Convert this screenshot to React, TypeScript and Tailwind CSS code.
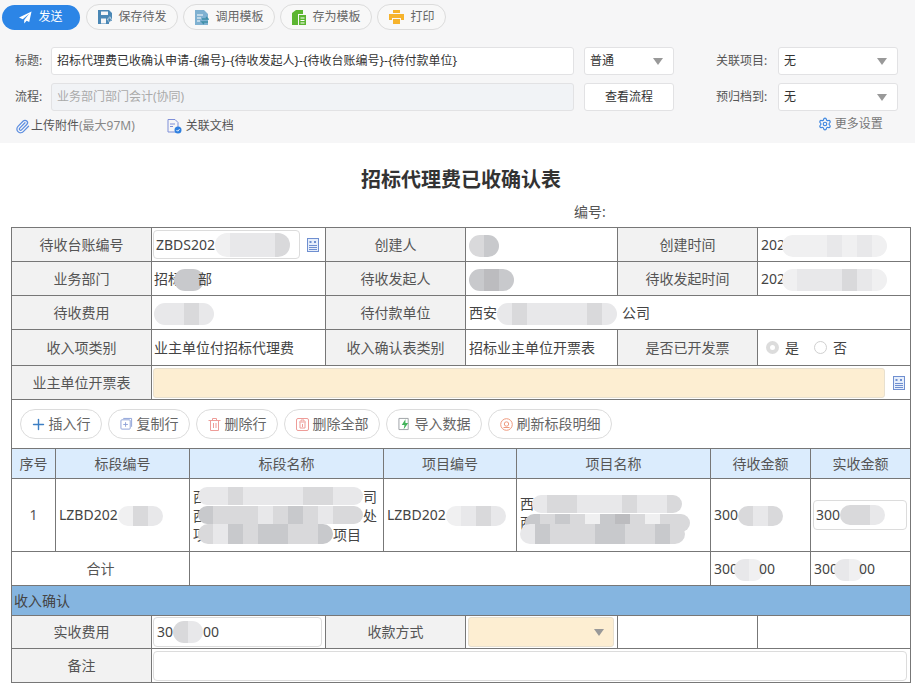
import type { ReactNode } from 'react';
import { Paperclip, Plus, Settings } from 'lucide-react';

const L = '#d9d9db';
const M = '#c8c9cc';
const S = '#e8e8ea';
const W = '#f0f0f1';

function Blur({ cells, h = 'h-5', className = '' }: { cells: string[]; h?: string; className?: string }) {
  return (
    <span className={`inline-flex align-middle -my-2 overflow-hidden rounded-full shrink-0 ${h} ${className}`}>
      {cells.map((c, i) => (
        <span key={i} className="w-[15px] h-full" style={{ backgroundColor: c }} />
      ))}
    </span>
  );
}

function SendIcon() {
  return (
    <svg width="13" height="13" viewBox="0 0 14 14" fill="#fff">
      <path d="M13.5.5 0 7l4 1.8L11 3 5.6 9.6V13.5l2.6-2.9 2.8 1.3z" />
    </svg>
  );
}

function SaveIcon() {
  return (
    <svg width="14" height="14" viewBox="0 0 14 14">
      <path d="M0 0h11l3 3v8h-3v3H0z" fill="#4a87b5" />
      <path d="M3 1.5h7v3.5H3zM3 8.5h5v5H3z" fill="#f6f6f7" />
      <path d="M9 9h2V7h1.5v2H14l-2.3 3.5z" fill="#4a87b5" stroke="#f6f6f7" strokeWidth=".5" />
    </svg>
  );
}

function TemplateIcon() {
  return (
    <svg width="14" height="15" viewBox="0 0 14 15">
      <path d="M0 0h9l4 4v11H0z" fill="#7fb1d1" />
      <path d="M2 5h6M2 8h4M2 11h3" stroke="#fff" strokeWidth="1.2" />
      <path d="M7 9h6l-2-2M13 12H7l2 2" stroke="#3f8fa8" strokeWidth="1.3" fill="none" />
    </svg>
  );
}

function SaveTemplateIcon() {
  return (
    <svg width="14" height="15" viewBox="0 0 14 15">
      <path d="M0 3 4 0h7v4H6v11H0z" fill="#5cb531" />
      <path d="M7 5h7v10H7z" fill="#5cb531" />
      <path d="M8.5 8h4M8.5 10.5h4M8.5 13h4" stroke="#fff" strokeWidth="1.2" />
    </svg>
  );
}

function PrintIcon() {
  return (
    <svg width="15" height="14" viewBox="0 0 15 14" fill="#f6b32c">
      <path d="M4 0h7v3H4zM0 4h15v6h-3V8H3v2H0zM4 9h7v5H4z" />
    </svg>
  );
}

function CopyIcon() {
  return (
    <svg width="13" height="14" viewBox="0 0 14 15" fill="none" stroke="#8a9fd6">
      <path d="M3.5 1.5h9v9" />
      <rect x="1" y="3" width="10" height="10" rx="1" />
      <path d="M6 5.5v5M3.5 8h5" />
    </svg>
  );
}

function TrashIcon() {
  return (
    <svg width="13" height="13" viewBox="0 0 12 13" fill="none" stroke="#ee9c98">
      <path d="M0 2.5h12M4 2V.5h4V2M2 3v9.500h8V3M5 5v5M7.500 5v5" />
    </svg>
  );
}

function TrashAllIcon() {
  return (
    <svg width="13" height="14" viewBox="0 0 13 14" fill="none" stroke="#ee9c98">
      <rect x=".5" y="1.500" width="12" height="12" rx="1.500" />
      <path d="M3 5h7M5 4.500V3h3v1.500M4 5.500v5.500h5V5.500M6.500 7v3" />
    </svg>
  );
}

function ImportIcon() {
  return (
    <svg width="13" height="14" viewBox="0 0 14 14">
      <path d="M1 1h10v12H1z" fill="none" stroke="#9a9fa3" />
      <path d="M8 2 4 8h3l-1 5 5-7H8z" fill="#43b35b" />
    </svg>
  );
}

function RefreshIcon() {
  return (
    <svg width="13" height="13" viewBox="0 0 13 13" fill="none" stroke="#ef9a7e">
      <circle cx="6.500" cy="6.500" r="5.800" />
      <circle cx="6.500" cy="6" r="2.200" />
      <path d="M3.500 9.500h6" />
    </svg>
  );
}

function LinkDocIcon() {
  return (
    <svg width="15" height="15" viewBox="0 0 15 15">
      <path d="M1 .5h7l3 3V13H1z" fill="#f6f6f7" stroke="#7f8fd8" />
      <path d="M3 5h5M3 7.500h3" stroke="#7f8fd8" />
      <circle cx="11" cy="11" r="3.500" fill="#2f80e0" />
      <path d="m9.500 11 1.200 1.200 1.800-2" stroke="#fff" fill="none" />
    </svg>
  );
}

function FormIcon() {
  return (
    <svg width="12" height="14" viewBox="0 0 12 14" className="shrink-0">
      <rect x=".5" y=".5" width="11" height="13" fill="#e6eefb" stroke="#6f8fd0" />
      <path d="M2.500 3h2v2h-2zM7 3h2v2H7z" fill="#6f8fd0" />
      <path d="M2 7.500h8M2 9.500h8M2 11.500h8" stroke="#6f8fd0" />
    </svg>
  );
}

function Caret() {
  return <span className="w-0 h-0 border-x-[5.5px] border-t-[7px] border-x-transparent border-t-[#999]" />;
}

function ToolButton({ icon, children }: { icon: ReactNode; children: ReactNode }) {
  return (
    <div className="flex items-center h-[26px] px-[10.5px] gap-[7px] rounded-full border border-[#dcdcdc] bg-[#f8f8f8] text-xs text-[#666]">
      {icon}
      <span>{children}</span>
    </div>
  );
}

function DetailButton({ icon, children }: { icon: ReactNode; children: ReactNode }) {
  return (
    <div className="flex items-center h-[30px] px-[10.5px] gap-1 rounded-full border border-[#dcdcdc] bg-white text-sm text-[#666]">
      {icon}
      <span>{children}</span>
    </div>
  );
}

function Select({ value, width }: { value: string; width: string }) {
  return (
    <div className={`flex items-center justify-between h-7 pl-[5px] pr-[10px] bg-white border border-[#e2e2e4] rounded-[3px] text-xs text-[#333] ${width}`}>
      <span>{value}</span>
      <Caret />
    </div>
  );
}

function Th({ children, colSpan }: { children?: ReactNode; colSpan?: number }) {
  return (
    <td colSpan={colSpan} className="border border-[#777] bg-[#f2f2f2] text-center text-[#555] p-0">
      {children}
    </td>
  );
}

function Td({ children, colSpan, className = '' }: { children?: ReactNode; colSpan?: number; className?: string }) {
  return (
    <td colSpan={colSpan} className={`border border-[#777] px-[3px] py-0 text-[#444] whitespace-nowrap overflow-hidden ${className}`}>
      {children}
    </td>
  );
}

function HeadCell({ children }: { children: ReactNode }) {
  return <td className="border border-[#777] bg-[#dbecfd] text-center text-[#555] p-0">{children}</td>;
}

export default function App() {
  return (
    <div className="w-[915px] h-[688px] overflow-hidden bg-white text-sm font-['Noto_Sans','Noto_Sans_CJK_SC',sans-serif]">
      <div className="h-[143px] bg-[#f6f6f7]">
        <div className="flex items-center gap-[5px] pt-1 pl-[2px]">
          <div className="flex items-center justify-center gap-[6px] w-[78px] h-[25px] rounded-full bg-[#2c85e6] text-xs text-white mr-[1px]">
            <SendIcon />
            <span>发送</span>
          </div>
          <ToolButton icon={<SaveIcon />}>保存待发</ToolButton>
          <ToolButton icon={<TemplateIcon />}>调用模板</ToolButton>
          <ToolButton icon={<SaveTemplateIcon />}>存为模板</ToolButton>
          <ToolButton icon={<PrintIcon />}>打印</ToolButton>
        </div>

        <div className="flex items-center mt-[17px] text-xs text-[#555]">
          <span className="w-[51px] pl-[15px]">标题:</span>
          <div className="flex items-center w-[523px] h-7 px-[5px] bg-white border border-[#e2e2e4] rounded-[3px] text-[#333]">
            招标代理费已收确认申请-{'{'}编号{'}'}-{'{'}待收发起人{'}'}-{'{'}待收台账编号{'}'}-{'{'}待付款单位{'}'}
          </div>
          <div className="ml-[10px]">
            <Select value="普通" width="w-[90px]" />
          </div>
          <span className="w-[104px] pl-[42px]">关联项目:</span>
          <Select value="无" width="w-[120px]" />
        </div>

        <div className="flex items-center mt-2 text-xs text-[#555]">
          <span className="w-[51px] pl-[15px]">流程:</span>
          <div className="flex items-center w-[523px] h-7 px-[5px] bg-[#f1f3f6] border border-[#e2e2e4] rounded-[3px] text-[#aaa]">
            业务部门部门会计(协同)
          </div>
          <div className="flex items-center justify-center ml-[10px] w-[90px] h-7 bg-white border border-[#e2e2e4] rounded-[3px] text-[#333]">
            查看流程
          </div>
          <span className="w-[104px] pl-[42px]">预归档到:</span>
          <Select value="无" width="w-[120px]" />
        </div>

        <div className="flex items-center mt-[5px] h-5 text-xs text-[#555]">
          <Paperclip size={15} color="#5d8ee0" className="ml-[15px] mr-[1px]" />
          <span>上传附件</span>
          <span className="text-[#888]">(最大97M)</span>
          <span className="ml-8 mr-[4px]">
            <LinkDocIcon />
          </span>
          <span>关联文档</span>
          <Settings size={14} color="#3f87e0" className="ml-[584px] mr-[3px] -mt-1" />
          <span className="text-[#777] -mt-1">更多设置</span>
        </div>
      </div>

      <div className="pt-[25px] pl-[7px] text-center text-xl leading-[24px] font-bold text-[#333]">招标代理费已收确认表</div>
      <div className="pl-[574px] mt-[11px] h-6 text-sm leading-[18px] text-[#555]">编号:</div>

      <div className="ml-[11px] w-[900px]">
        <table className="w-full table-fixed border-collapse">
          <colgroup>
            <col className="w-[140px]" />
            <col className="w-[174px]" />
            <col className="w-[140px]" />
            <col className="w-[152px]" />
            <col className="w-[140px]" />
            <col />
          </colgroup>
          <tbody>
            <tr className="h-[34px]">
              <Th>待收台账编号</Th>
              <Td className="pl-[2px]">
                <div className="flex items-center gap-[7px] -ml-px">
                  <div className="flex items-center w-[147px] h-[29px] px-[2px] border border-[#dcdcdc] rounded-[4px] overflow-hidden">
                    ZBDS202
                    <Blur cells={[W, S, S, S, L]} h="h-6" />
                  </div>
                  <FormIcon />
                </div>
              </Td>
              <Th>创建人</Th>
              <Td><Blur cells={[L, M]} h="h-[22px]" /></Td>
              <Th>创建时间</Th>
              <Td>
                202
                <Blur cells={[W, W, W, S, W, S, W]} h="h-[22px]" className="-ml-[3px]" />
              </Td>
            </tr>
            <tr className="h-[34px]">
              <Th>业务部门</Th>
              <Td className="pl-[2px]">
                招标
                <Blur cells={[M, M]} h="h-[22px]" className="-ml-[8px] -mr-[6px]" />
                部
              </Td>
              <Th>待收发起人</Th>
              <Td><Blur cells={[M, '#bcbcbf', M]} h="h-[22px]" /></Td>
              <Th>待收发起时间</Th>
              <Td>
                202
                <Blur cells={[W, S, S, S, L, S, W]} h="h-[22px]" className="-ml-[3px]" />
              </Td>
            </tr>
            <tr className="h-[34px]">
              <Th>待收费用</Th>
              <Td className="pl-[2px]"><Blur cells={[S, S, L, S]} h="h-[22px]" /></Td>
              <Th>待付款单位</Th>
              <Td colSpan={3}>
                西安
                <Blur cells={[S, L, S, S, S, S, L, S]} h="h-[22px]" className="mr-[5px]" />
                公司
              </Td>
            </tr>
            <tr className="h-9">
              <Th>收入项类别</Th>
              <Td className="pl-[2px]">业主单位付招标代理费</Td>
              <Th>收入确认表类别</Th>
              <Td>招标业主单位开票表</Td>
              <Th>是否已开发票</Th>
              <Td>
                <div className="flex items-center pl-[5px]">
                  <span className="flex items-center justify-center w-[13px] h-[13px] rounded-full bg-[#dcdcdc]">
                    <span className="w-[5px] h-[5px] rounded-full bg-white" />
                  </span>
                  <span className="ml-[6px]">是</span>
                  <span className="ml-[15px] w-[13px] h-[13px] rounded-full border border-[#d0d0d0]" />
                  <span className="ml-[6px]">否</span>
                </div>
              </Td>
            </tr>
            <tr className="h-[34px]">
              <Th>业主单位开票表</Th>
              <td colSpan={5} className="border border-[#777] pl-[1px] pr-[5px] py-0">
                <div className="flex items-center gap-2">
                  <div className="flex-1 h-[30px] bg-[#fdeed2] border border-[#e8e0cf] rounded-[3px]" />
                  <FormIcon />
                </div>
              </td>
            </tr>
          </tbody>
        </table>

        <div className="flex items-center gap-[6px] h-12 pl-2 border-x border-[#777]">
          <DetailButton icon={<Plus size={17} color="#3d7fc4" className="-mx-[2px]" />}>插入行</DetailButton>
          <DetailButton icon={<CopyIcon />}>复制行</DetailButton>
          <DetailButton icon={<TrashIcon />}>删除行</DetailButton>
          <DetailButton icon={<TrashAllIcon />}>删除全部</DetailButton>
          <DetailButton icon={<ImportIcon />}>导入数据</DetailButton>
          <DetailButton icon={<RefreshIcon />}>刷新标段明细</DetailButton>
        </div>

        <table className="w-full table-fixed border-collapse">
          <colgroup>
            <col className="w-[44px]" />
            <col className="w-[134px]" />
            <col className="w-[194px]" />
            <col className="w-[133px]" />
            <col className="w-[194px]" />
            <col className="w-[100px]" />
            <col />
          </colgroup>
          <tbody>
            <tr className="h-[30px]">
              <HeadCell>序号</HeadCell>
              <HeadCell>标段编号</HeadCell>
              <HeadCell>标段名称</HeadCell>
              <HeadCell>项目编号</HeadCell>
              <HeadCell>项目名称</HeadCell>
              <HeadCell>待收金额</HeadCell>
              <HeadCell>实收金额</HeadCell>
            </tr>
            <tr className="h-[73px]">
              <td className="border border-[#777] text-center text-[#555] p-0">1</td>
              <Td>
                LZBD202
                <Blur cells={[W, L, S]} />
              </Td>
              <Td>
                <div className="flex flex-col leading-[19px]">
                  <div className="flex items-center">
                    西
                    <Blur cells={[S, S, L, S, S, S, S, L, L, S, S]} h="h-[18px]" className="-ml-[9px]" />
                    司
                  </div>
                  <div className="flex items-center">
                    西
                    <Blur cells={[M, L, L, L, S, L, M, L, S, L, L]} h="h-[18px]" className="-ml-[9px]" />
                    处
                  </div>
                  <div className="flex items-center">
                    项
                    <Blur cells={[L, S, M, L, M, M, L, L, M]} h="h-[20px]" className="-ml-[9px]" />
                    项目
                  </div>
                </div>
              </Td>
              <Td>
                LZBD202
                <Blur cells={[W, S, L, S]} />
              </Td>
              <Td>
                <div className="flex flex-col leading-[19px]">
                  <div className="flex items-center">
                    西
                    <Blur cells={[S, L, L, S, S, S, L, S, S, L]} h="h-[18px]" className="-ml-[2px]" />
                  </div>
                  <div className="flex items-center">
                    西
                    <Blur cells={[M, L, M, L, W, M, '#bcbcbf', L, W, L, L]} h="h-[18px]" className="-ml-[9px]" />
                  </div>
                  <div className="flex items-center">
                    <Blur cells={[S, M, L, L, L, M, M, L, L, M, L]} h="h-[20px]" />
                  </div>
                </div>
              </Td>
              <Td>
                300
                <Blur cells={[L, S, L]} />
              </Td>
              <Td>
                <div className="flex items-center h-[30px] -ml-px px-[2px] border border-[#dcdcdc] rounded-[4px] overflow-hidden">
                  300
                  <Blur cells={[L, L, S]} />
                </div>
              </Td>
            </tr>
            <tr className="h-[34px]">
              <td colSpan={2} className="border border-[#777] text-center text-[#555] p-0">合计</td>
              <td colSpan={3} className="border border-[#777] p-0" />
              <Td>
                300
                <Blur cells={[S, W]} h="h-[22px]" className="-ml-[4px] -mr-[5px]" />
                00
              </Td>
              <Td>
                300
                <Blur cells={[S, W]} h="h-[22px]" className="-ml-[4px] -mr-[5px]" />
                00
              </Td>
            </tr>
          </tbody>
        </table>

        <table className="w-full table-fixed border-collapse -mt-px">
          <colgroup>
            <col className="w-[140px]" />
            <col className="w-[174px]" />
            <col className="w-[140px]" />
            <col className="w-[152px]" />
            <col className="w-[140px]" />
            <col />
          </colgroup>
          <tbody>
            <tr className="h-[30px]">
              <td colSpan={6} className="border border-[#777] bg-[#85b5e0] px-[2px] py-0 text-[#444]">收入确认</td>
            </tr>
            <tr className="h-[33px]">
              <Th>实收费用</Th>
              <Td className="pl-[1px]">
                <div className="flex items-center h-[30px] px-[3px] border border-[#dcdcdc] rounded-[4px]">
                  30
                  <Blur cells={[L, S]} h="h-[22px]" />
                  00
                </div>
              </Td>
              <Th>收款方式</Th>
              <Td>
                <div className="flex items-center justify-end h-[30px] -ml-px pr-[9px] bg-[#fdeed2] border border-[#e8e0cf] rounded-[3px]">
                  <Caret />
                </div>
              </Td>
              <Td />
              <Td />
            </tr>
            <tr className="h-[34px]">
              <Th>备注</Th>
              <Td colSpan={5} className="pl-[1px]">
                <div className="h-[30px] border border-[#dcdcdc] rounded-[4px]" />
              </Td>
            </tr>
          </tbody>
        </table>
      </div>
    </div>
  );
}
